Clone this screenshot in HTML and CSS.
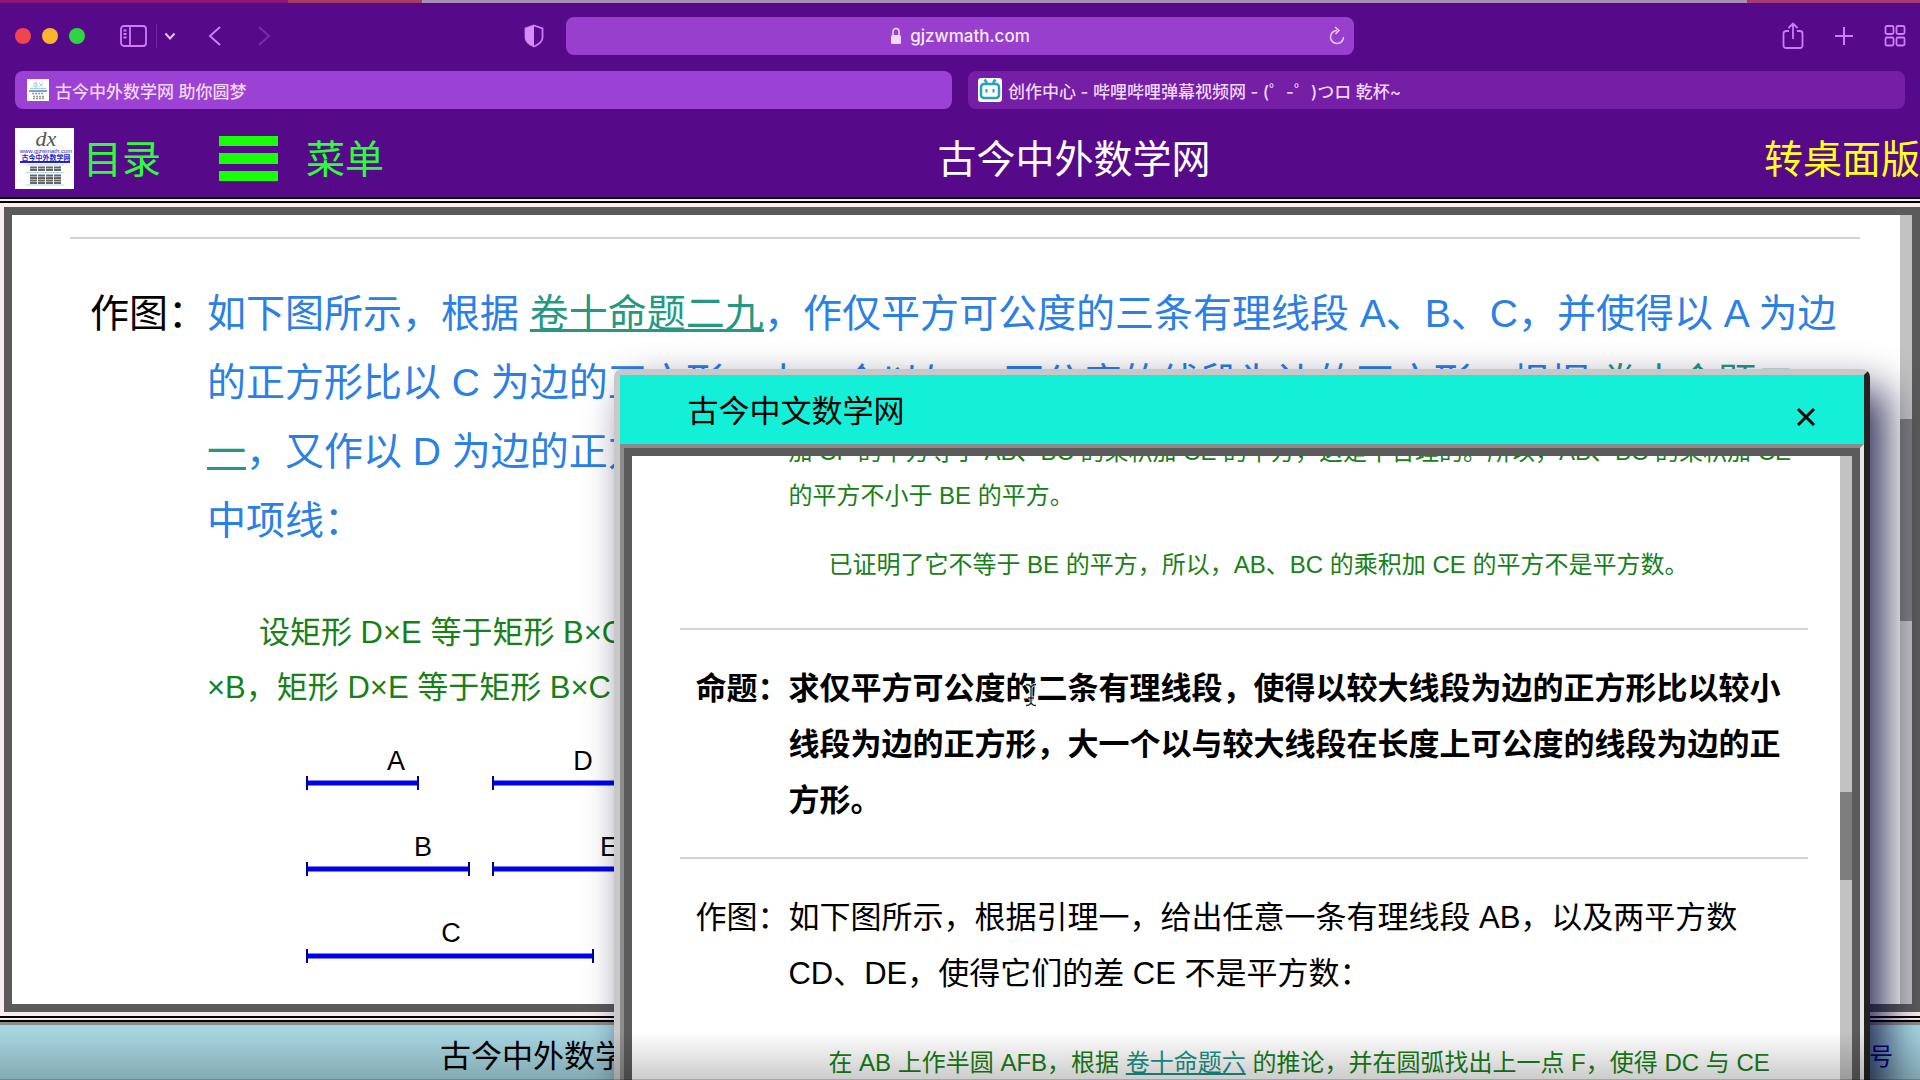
FILE: index.html
```html
<!DOCTYPE html>
<html lang="zh-CN">
<head>
<meta charset="utf-8">
<title>古今中外数学网 助你圆梦</title>
<link rel="stylesheet" href="styles.css">
</head>
<body>
<div class="browser">
  <div class="desktop-strip"></div>
  <header class="toolbar">
    <div class="tools tools-left">
      <div class="lights"><span class="light red"></span><span class="light amber"></span><span class="light green"></span></div>
      <button class="icon-btn sidebar-btn" type="button" aria-label="边栏"><svg width="28" height="24" viewBox="0 0 28 24"><rect x="2" y="2" width="25" height="20" rx="3" class="line"/><path d="M11 2v20M4.500 6.500h3M4.500 10h3M4.500 13.500h3" class="line"/></svg></button>
      <span class="divider"></span>
      <button class="icon-btn chevron-btn" type="button" aria-label="更多"><svg width="12" height="10" viewBox="0 0 12 10"><path d="M1.500 2.500l4.500 5l4.500-5" class="line bold"/></svg></button>
      <button class="icon-btn back-btn" type="button" aria-label="后退"><svg width="14" height="22" viewBox="0 0 14 22"><path d="M12 2L2 11l10 9" class="line bold"/></svg></button>
      <button class="icon-btn forward-btn" type="button" aria-label="前进" disabled><svg width="14" height="22" viewBox="0 0 14 22"><path d="M2 2l10 9L2 20" class="line bold"/></svg></button>
      <button class="icon-btn shield-btn" type="button" aria-label="隐私报告"><svg width="20" height="24" viewBox="0 0 20 24"><path d="M10 1.500L18.500 4.500v9c0 4-4 7-8.500 9c-4.500-2-8.500-5-8.500-9v-9z" class="line"/><path d="M10 1.500v21c-4.500-2-8.500-5-8.500-9v-9z" class="solid"/></svg></button>
    </div>
    <div class="address">
      <svg width="12" height="18" viewBox="0 0 12 18"><path d="M3 8V5a3 3.500 0 0 1 6 0v3" fill="none" stroke="#f0d8fc" stroke-width="1.600"/><rect x="1" y="8" width="10" height="9" rx="1.500" fill="#f0d8fc"/></svg>
      <span>gjzwmath.com</span>
      <button class="icon-btn reload" type="button" aria-label="重新载入"><svg width="18" height="20" viewBox="0 0 18 20"><path d="M9 4.500A6.500 6.500 0 1 0 15.500 11M7 1l4 3.500L7.500 8" fill="none" stroke="#ecc8fc" stroke-width="1.500"/></svg></button>
    </div>
    <div class="tools tools-right">
      <button class="icon-btn" type="button" aria-label="共享"><svg width="22" height="28" viewBox="0 0 22 28"><path d="M7 9H4a2.500 2.500 0 0 0-2.500 2.500v12A2.500 2.500 0 0 0 4 26h14a2.500 2.500 0 0 0 2.500-2.500v-12A2.500 2.500 0 0 0 18 9h-3M11 17V2M6.500 6L11 1.500L15.500 6" class="line"/></svg></button>
      <button class="icon-btn" type="button" aria-label="新建标签页"><svg width="20" height="20" viewBox="0 0 20 20"><path d="M10 1v18M1 10h18" class="line bold"/></svg></button>
      <button class="icon-btn" type="button" aria-label="标签页概览"><svg width="22" height="22" viewBox="0 0 22 22"><path d="M3 1h5a1.500 1.500 0 0 1 1.500 1.500v5A1.500 1.500 0 0 1 8 9H3a1.500 1.500 0 0 1-1.500-1.500v-5A1.500 1.500 0 0 1 3 1zM14 1h5a1.500 1.500 0 0 1 1.500 1.500v5A1.500 1.500 0 0 1 19 9h-5a1.500 1.500 0 0 1-1.500-1.500v-5A1.500 1.500 0 0 1 14 1zM3 12.500h5A1.500 1.500 0 0 1 9.500 14v5A1.500 1.500 0 0 1 8 20.500H3A1.500 1.500 0 0 1 1.500 19v-5A1.500 1.500 0 0 1 3 12.500zM14 12.500h5a1.500 1.500 0 0 1 1.500 1.500v5a1.500 1.500 0 0 1-1.500 1.500h-5a1.500 1.500 0 0 1-1.500-1.500v-5a1.500 1.500 0 0 1 1.500-1.500z" class="line"/></svg></button>
    </div>
  </header>
  <nav class="tabs">
    <a class="tab active" href="#"><svg width="22" height="22" viewBox="0 0 22 22"><path d="M0 0h22v22H0z" fill="#fff"/><path d="M7 4h3v4H7zM9 2v6M12 4l4 4M16 4l-4 4" fill="none" stroke="#a5d8e2"/><path d="M3 9.500h16" stroke="#a5cbe8"/><path d="M2 12h18" stroke="#4e7fd0" stroke-width="1.500"/><path d="M5 14.500h12M6 17.500h11M6 19.500h11" stroke="#999" stroke-width="1.500" stroke-dasharray="2 1"/></svg><span>古今中外数学网 助你圆梦</span></a>
    <a class="tab" href="#"><svg width="24" height="24" viewBox="0 0 24 24"><rect width="24" height="24" rx="3" fill="#fff"/><path d="M6.500 1.500L9 5M17.500 1.500L15 5" stroke="#239fc8" stroke-width="2.500"/><rect x="3" y="6" width="18" height="14" rx="3" fill="none" stroke="#239fc8" stroke-width="2.500"/><path d="M8.500 11v3.500M15.500 11v3.500" stroke="#239fc8" stroke-width="2"/></svg><span>创作中心 - 哔哩哔哩弹幕视频网 - (゜-゜)つロ 乾杯~</span></a>
  </nav>
  <header class="site-head">
    <a class="head-link" href="#"><svg width="59" height="61" viewBox="0 0 59 61"><path d="M0 0h59v61H0z" fill="#fff"/><text x="31" y="18" class="logo-dx">dx</text><text x="31" y="25" class="logo-url">www.gjzwmath.com</text><text x="31" y="32" class="logo-name">古今中外数学网</text><path d="M5 34h50" stroke="#2a1fd0" stroke-width="2"/><path d="M11 37h38M11 44.500h38M11 57h38" stroke="#a8d8e8"/><path d="M15 39.500h31M15 42h31M15 47.500h31M15 50h31M15 52.500h31M15 55h31" stroke="#666" stroke-width="2" stroke-dasharray="7 1"/></svg><span>目录</span></a>
    <a class="head-link menu" href="#"><svg width="59" height="46" viewBox="0 0 59 46"><path d="M0 0h59v10H0zM0 17h59v11H0zM0 35h59v10H0z" fill="#19ff0a"/></svg><span>菜单</span></a>
    <h1 class="site-title">古今中外数学网</h1>
    <a class="desktop-link" href="#">转桌面版</a>
  </header>
  <main class="page">
    <div class="frame">
      <div class="doc">
        <hr>
        <section class="item">
          <div class="label">作图：</div>
          <div class="copy blue">如下图所示，根据 <a href="#">卷十命题二九</a>，作仅平方可公度的三条有理线段 A、B、C，并使得以 A 为边<br>的正方形比以 C 为边的正方形，大一个以与 A 可公度的线段为边的正方形，根据 <a href="#">卷十命题二<br>一</a>，又作以 D 为边的正方形等于矩形，<br>中项线：</div>
        </section>
        <div class="proof">
          <p>设矩形 D×E 等于矩形 B×C，</p>
          <p class="flush">×B，矩形 D×E 等于矩形 B×C，</p>
        </div>
        <svg class="figure" width="400" height="220" viewBox="0 0 400 220">
          <g stroke="#0000ee" stroke-width="5"><path d="M2 37H113M188 37H398M2 123H164M188 123H398M2 210H288"/></g>
          <g stroke="#00009c" stroke-width="2"><path d="M2 30v14M113 30v14M188 30v14M2 116v14M164 116v14M188 116v14M2 203v14M288 203v14"/></g>
          <g class="marks"><text x="91" y="24">A</text><text x="278" y="24">D</text><text x="118" y="110">B</text><text x="304" y="110">E</text><text x="146" y="196">C</text></g>
        </svg>
      </div>
      <div class="track main-track"><span class="thumb"></span></div>
    </div>
  </main>
  <footer class="site-foot"><span>古今中外数学网</span><a href="#">号</a></footer>
</div>

<div class="dialog" role="dialog" aria-label="古今中文数学网">
  <div class="dialog-head"><h2>古今中文数学网</h2><button type="button" class="close" aria-label="关闭"><svg width="20" height="20" viewBox="0 0 20 20"><path d="M2 2l16 16M18 2L2 18" stroke="#000" stroke-width="3"/></svg></button></div>
  <div class="dialog-frame">
    <div class="reader">
      <div class="lemma">
        <p class="flush">加 CF 的平方等于 AB、BC 的乘积加 CE 的平方，这是不合理的。所以，AB、BC 的乘积加 CE<br>的平方不小于 BE 的平方。</p>
        <p>已证明了它不等于 BE 的平方，所以，AB、BC 的乘积加 CE 的平方不是平方数。</p>
      </div>
      <hr>
      <section class="item strong">
        <div class="label">命题：</div>
        <div class="copy">求仅平方可公度的二条有理线段，使得以较大线段为边的正方形比以较小<br>线段为边的正方形，大一个以与较大线段在长度上可公度的线段为边的正<br>方形。</div>
      </section>
      <hr>
      <section class="item">
        <div class="label">作图：</div>
        <div class="copy">如下图所示，根据引理一，给出任意一条有理线段 AB，以及两平方数<br>CD、DE，使得它们的差 CE 不是平方数：</div>
      </section>
      <div class="lemma after">
        <p>在 AB 上作半圆 AFB，根据 <a href="#">卷十命题六</a> 的推论，并在圆弧找出上一点 F，使得 DC 与 CE</p>
      </div>
    </div>
    <div class="track reader-track"><span class="thumb"></span></div>
  </div>
</div>
<svg class="cursor" width="12" height="24" viewBox="0 0 12 24"><g fill="none"><path d="M1 1.500q4 0 5 3q1-3 5-3M6 4v16M1 22.500q4 0 5-3q1 3 5 3M3 15h6" stroke="#fff" stroke-width="3"/><path d="M1 1.500q4 0 5 3q1-3 5-3M6 4v16M1 22.500q4 0 5-3q1 3 5 3M3 15h6" stroke="#222" stroke-width="1.300"/></g></svg>
<div class="dock-shade"></div>
</body>
</html>
```
FILE: styles.css
```css
* { box-sizing: border-box; }
body {
  margin: 0;
  height: 100vh;
  overflow: hidden;
  font-family: "Liberation Sans", "Noto Sans CJK SC", sans-serif;
  color: #000;
}
h1, h2, p { margin: 0; font-weight: 400; }
a { color: inherit; text-decoration: none; }
button { padding: 0; border: 0; background: none; }
svg { display: block; flex: none; }
.line { fill: none; stroke: #cf7cf6; stroke-width: 1.8; }
.line.bold { stroke-width: 2; }
.solid { fill: #d98bfb; }

.browser {
  display: flex;
  flex-direction: column;
  height: 100vh;
  background: #fbecee;
}
.desktop-strip {
  flex: none;
  height: 3px;
  background: linear-gradient(90deg, #8f1478 15%, #a43c66 15%, #a43c66 22%, #a98fb4 22%, #a98fb4 91%, #a43c72 91%);
}
.toolbar {
  flex: none;
  display: grid;
  grid-template-columns: 566px 1fr 566px;
  align-items: center;
  height: 68px;
  padding-bottom: 2px;
  background: #560a8a;
}
.tools { display: flex; align-items: center; }
.tools-left { padding-left: 15px; }
.tools-right { justify-content: flex-end; gap: 30px; padding-right: 14px; }
.lights { display: flex; gap: 11px; }
.light { width: 16px; height: 16px; border-radius: 50%; }
.red { background: #f0454f; }
.amber { background: #f7b52e; }
.green { background: #2fd540; }
.sidebar-btn { margin-left: 34px; }
.divider { width: 1px; height: 24px; margin-left: 9px; background: #7426a4; }
.chevron-btn { margin-left: 7px; }
.chevron-btn .line { stroke: #ecc0fc; }
.back-btn { margin-left: 32px; }
.forward-btn { margin-left: 35px; }
.forward-btn .line { stroke: #7d2aac; }
.shield-btn { margin: 0 22px 0 auto; }
.address {
  position: relative;
  display: flex;
  align-items: center;
  justify-content: center;
  gap: 8px;
  height: 38px;
  border-radius: 8px;
  background: #983fce;
  color: #fbeaff;
  font: 500 17px/24px Inter, "Liberation Sans", sans-serif;
}
.reload { position: absolute; right: 8px; }

.tabs {
  flex: none;
  display: grid;
  grid-template-columns: 1fr 1fr;
  gap: 16px;
  height: 47px;
  padding: 0 15px 9px;
  background: #560a8a;
}
.tab {
  display: flex;
  align-items: center;
  gap: 6px;
  padding-left: 10px;
  border-radius: 8px;
  background: #741fa6;
  color: #f2d6fc;
  font-family: Inter, "Noto Sans CJK SC", sans-serif;
  font-size: 17px;
  font-weight: 500;
  white-space: nowrap;
}
.tab.active { padding-left: 12px; background: #9b41d3; }

.site-head {
  flex: none;
  display: flex;
  align-items: center;
  height: 79px;
  padding: 2px 0 0 15px;
  background: #560a8a;
  font-size: 39px;
  line-height: 58px;
}
.head-link { display: flex; align-items: center; gap: 9px; color: #2bff3a; }
.head-link.menu { margin-left: 58px; gap: 28px; }
.head-link span, .site-title, .desktop-link { padding-top: 2px; }
.site-title {
  margin: 0 auto;
  color: #fff;
  font-size: 39px;
}
.desktop-link { color: #ffff1e; }
.logo-dx { font: italic 22px "Liberation Serif", serif; fill: #555; text-anchor: middle; }
.logo-url { font: 6px "Liberation Sans", sans-serif; fill: #2a1fd0; text-anchor: middle; }
.logo-name { font: 700 7px "Noto Sans CJK SC", sans-serif; fill: #2a1fd0; text-anchor: middle; }

.page {
  flex: 1;
  min-height: 0;
  padding: 4px 0 4px 4px;
  border-top: 6px double #000;
  border-bottom: 6px double #000;
}
.frame {
  display: flex;
  height: 100%;
  border: 8px solid #5b5b5b;
  background: #fff;
}
.doc { flex: 1; min-width: 0; overflow: hidden; padding: 22px 40px 0 58px; }
.track { flex: none; width: 12px; background: #c2c2c2; }
.thumb { display: block; background: #7d7d7d; }
.main-track { padding-top: 204px; }
.main-track .thumb { height: 202px; }
hr { margin: 0; border: 0; border-top: 2px solid #d2d2d2; }
.item { display: flex; white-space: nowrap; }
.doc .item { padding: 40px 0 0 20px; font-size: 39px; line-height: 69px; }
.blue { color: #2a80e4; }
.blue a { color: #249880; text-decoration: underline; }
.proof, .lemma { color: #178017; white-space: nowrap; }
.proof { padding: 50px 0 0 137px; font-size: 31px; line-height: 55px; }
.proof p { text-indent: 52px; }
.proof .flush, .lemma .flush { text-indent: 0; }
.figure { margin: 31px 0 0 235px; }
.marks { font-size: 27px; text-anchor: middle; }

.site-foot {
  flex: none;
  display: flex;
  justify-content: space-between;
  height: 58px;
  padding: 9px 27px 0 440px;
  border-top: 3px solid #8c8c8c;
  background: #a6d5e0;
  font-size: 31px;
  line-height: 46px;
}
.site-foot a { color: #0000a0; font-size: 24px; }

.dialog {
  position: fixed;
  top: 369px;
  right: 50px;
  bottom: -20px;
  left: 32%;
  display: flex;
  flex-direction: column;
  border: 6px solid;
  border-color: #c8c8c8 #222 #222 #c8c8c8;
  border-radius: 8px;
  box-shadow: 16px 20px 40px rgba(0, 0, 50, .8);
}
.dialog-head {
  flex: none;
  display: flex;
  align-items: center;
  justify-content: space-between;
  height: 69px;
  padding: 0 48px 0 67px;
  background: #14f0d8;
}
.dialog-head h2 { padding-top: 5px; font-size: 31px; line-height: 46px; }
.close { padding-top: 14px; }
.dialog-frame {
  flex: 1;
  min-height: 0;
  display: flex;
  border: 4px solid #8c8c8c;
  border-right-color: #e6e6e6;
  background: #fff;
}
.reader {
  flex: 1;
  min-width: 0;
  overflow: hidden;
  padding: 0 32px 0 48px;
  border: 8px solid #5b5b5b;
  border-right: 0;
}
.reader-track {
  width: 20px;
  padding-top: 336px;
  border: 8px solid #5b5b5b;
  border-left: 0;
}
.reader-track .thumb { height: 88px; }
.reader .item { padding: 31px 0 0 15px; font-size: 31px; line-height: 56px; }
.strong { font-weight: 700; }
.reader .strong { padding-bottom: 28px; }
.lemma { margin-top: -26px; padding: 0 0 41px 108px; font-size: 24px; line-height: 44px; }
.lemma p { text-indent: 40px; }
.lemma p + p { margin-top: 25px; }
.lemma.after { margin-top: 39px; }
.lemma a { color: #1a9488; text-decoration: underline; }

.cursor { position: fixed; left: 1025px; top: 683px; }
.dock-shade {
  position: fixed;
  right: 0;
  bottom: 0;
  left: 0;
  height: 48px;
  border-bottom: 1px solid rgba(0, 0, 0, .35);
  background: linear-gradient(rgba(0, 0, 0, 0), rgba(0, 0, 0, .2));
  pointer-events: none;
}
```
